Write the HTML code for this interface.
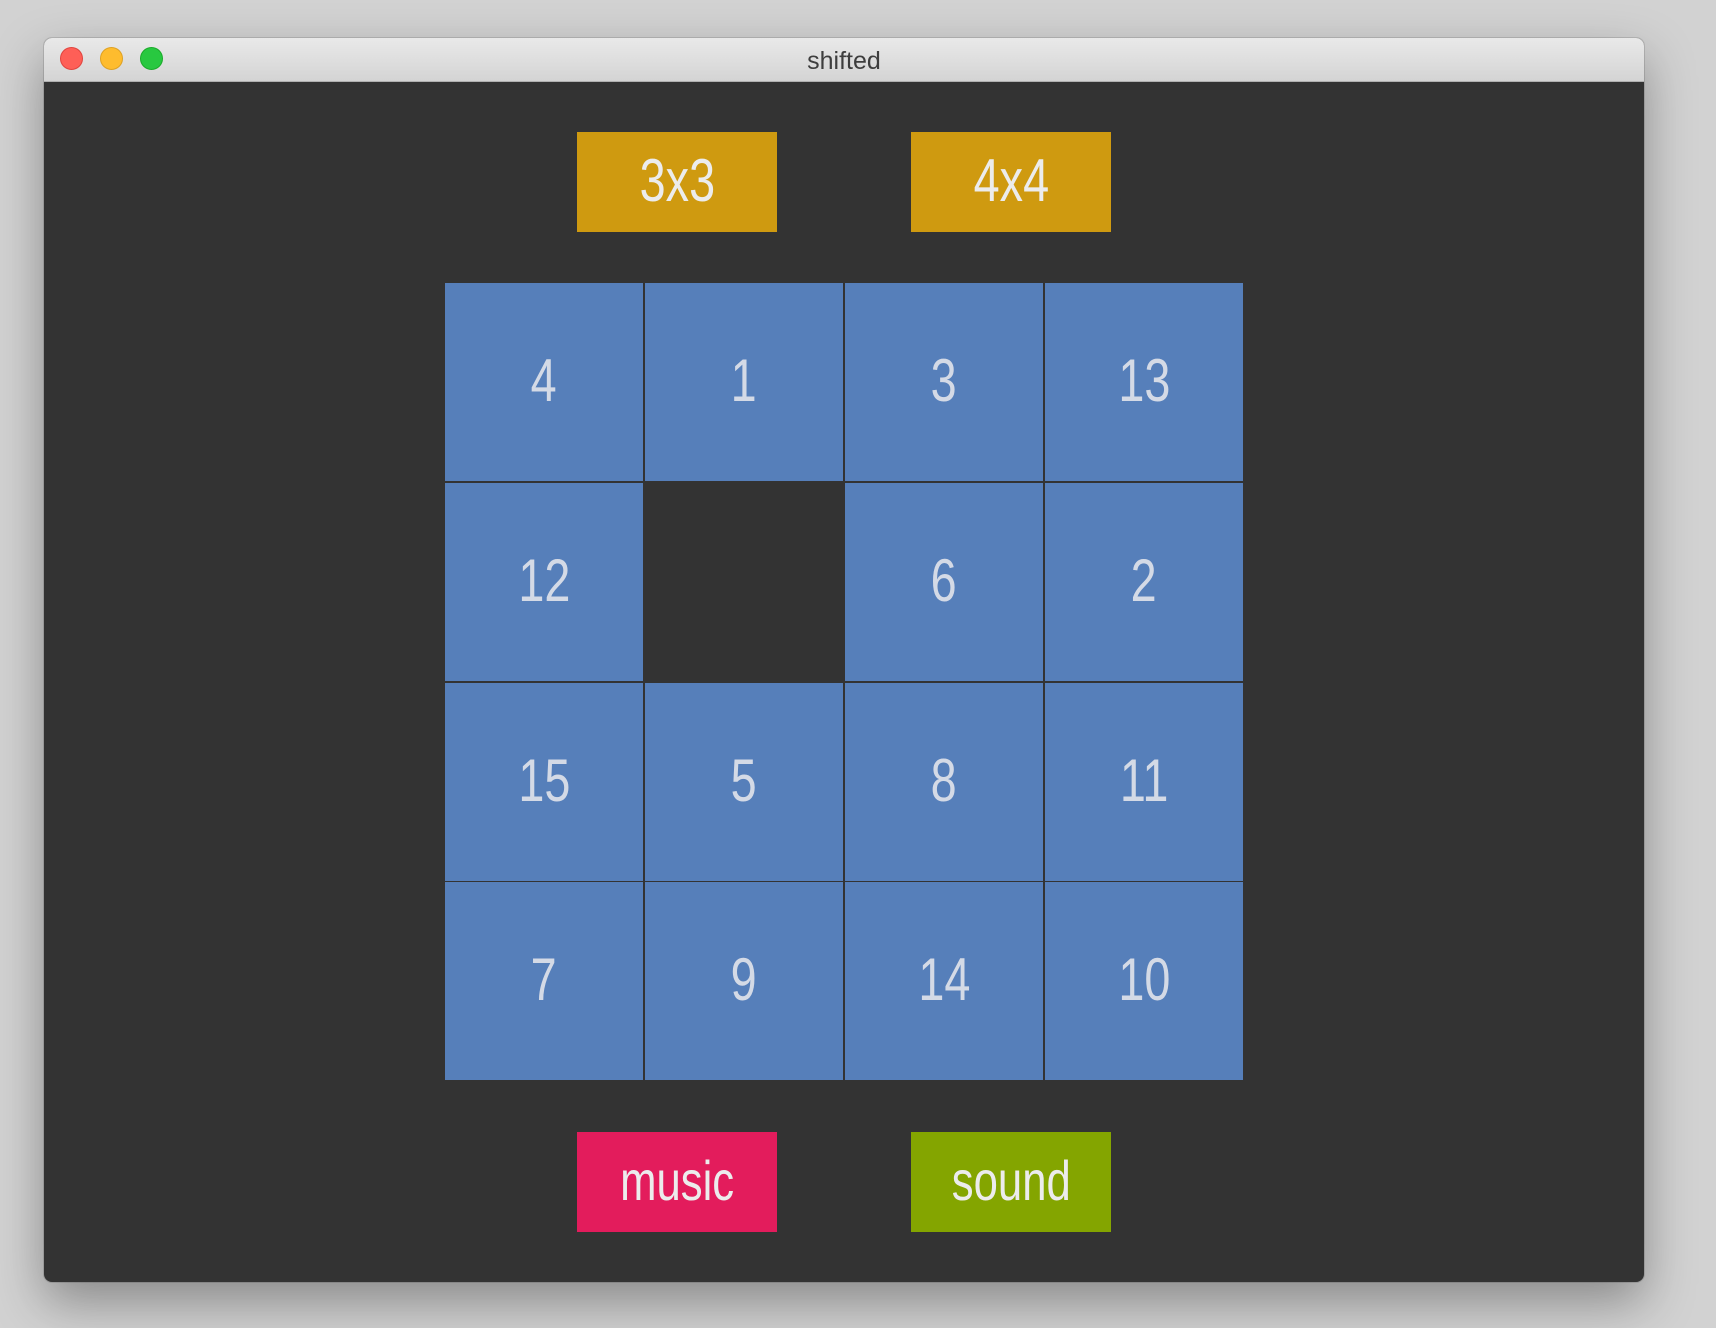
<!DOCTYPE html>
<html><head><style>
html,body{margin:0;padding:0;}
body{width:1716px;height:1328px;background:#d2d2d2;position:relative;overflow:hidden;font-family:"Liberation Sans",sans-serif;}
.win{position:absolute;left:44px;top:38px;width:1600px;height:1244px;border-radius:8px;overflow:hidden;box-shadow:0 20px 50px rgba(0,0,0,0.35),0 0 0 1px rgba(0,0,0,0.12);background:#333;}
.tb{position:absolute;left:0;top:0;width:100%;height:43px;background:linear-gradient(#e9e9e9,#d4d4d4);border-bottom:1px solid #b0b0b0;}
.dot{position:absolute;top:9px;width:23px;height:23px;border-radius:50%;}
.title{position:absolute;left:0;right:0;top:9px;text-align:center;font-size:25px;color:#3e3e3e;}
.b{position:absolute;width:200px;height:100px;display:flex;align-items:center;justify-content:center;color:#ececec;font-size:60px;font-weight:normal;}
.b span,.t span{display:inline-block;transform:scaleX(0.78);position:relative;top:-2px;}
.t{position:absolute;width:198px;height:198px;background:#567fba;display:flex;align-items:center;justify-content:center;color:#d4dae6;font-size:60px;}
</style></head><body>
<div class="win">
<div class="tb">
<div class="dot" style="left:16px;background:#fe5f57;border:1px solid #e0443e;box-sizing:border-box"></div>
<div class="dot" style="left:56px;background:#febc2e;border:1px solid #dea123;box-sizing:border-box"></div>
<div class="dot" style="left:96px;background:#28c840;border:1px solid #1aab29;box-sizing:border-box"></div>
<div class="title">shifted</div>
</div>
<div class="b" style="left:533px;top:94px;background:#cf9a10"><span>3x3</span></div>
<div class="b" style="left:867px;top:94px;background:#cf9a10"><span>4x4</span></div>
<div class="t" style="left:401px;top:245px"><span>4</span></div>
<div class="t" style="left:601px;top:245px"><span>1</span></div>
<div class="t" style="left:801px;top:245px"><span>3</span></div>
<div class="t" style="left:1001px;top:245px"><span>13</span></div>
<div class="t" style="left:401px;top:445px"><span>12</span></div>
<div class="t" style="left:801px;top:445px"><span>6</span></div>
<div class="t" style="left:1001px;top:445px"><span>2</span></div>
<div class="t" style="left:401px;top:645px"><span>15</span></div>
<div class="t" style="left:601px;top:645px"><span>5</span></div>
<div class="t" style="left:801px;top:645px"><span>8</span></div>
<div class="t" style="left:1001px;top:645px"><span>11</span></div>
<div class="t" style="left:401px;top:844px"><span>7</span></div>
<div class="t" style="left:601px;top:844px"><span>9</span></div>
<div class="t" style="left:801px;top:844px"><span>14</span></div>
<div class="t" style="left:1001px;top:844px"><span>10</span></div>
<div class="b" style="left:533px;top:1094px;background:#e31c5c;font-size:56px"><span>music</span></div>
<div class="b" style="left:867px;top:1094px;background:#84a500;font-size:56px"><span>sound</span></div>
</div>
</body></html>
